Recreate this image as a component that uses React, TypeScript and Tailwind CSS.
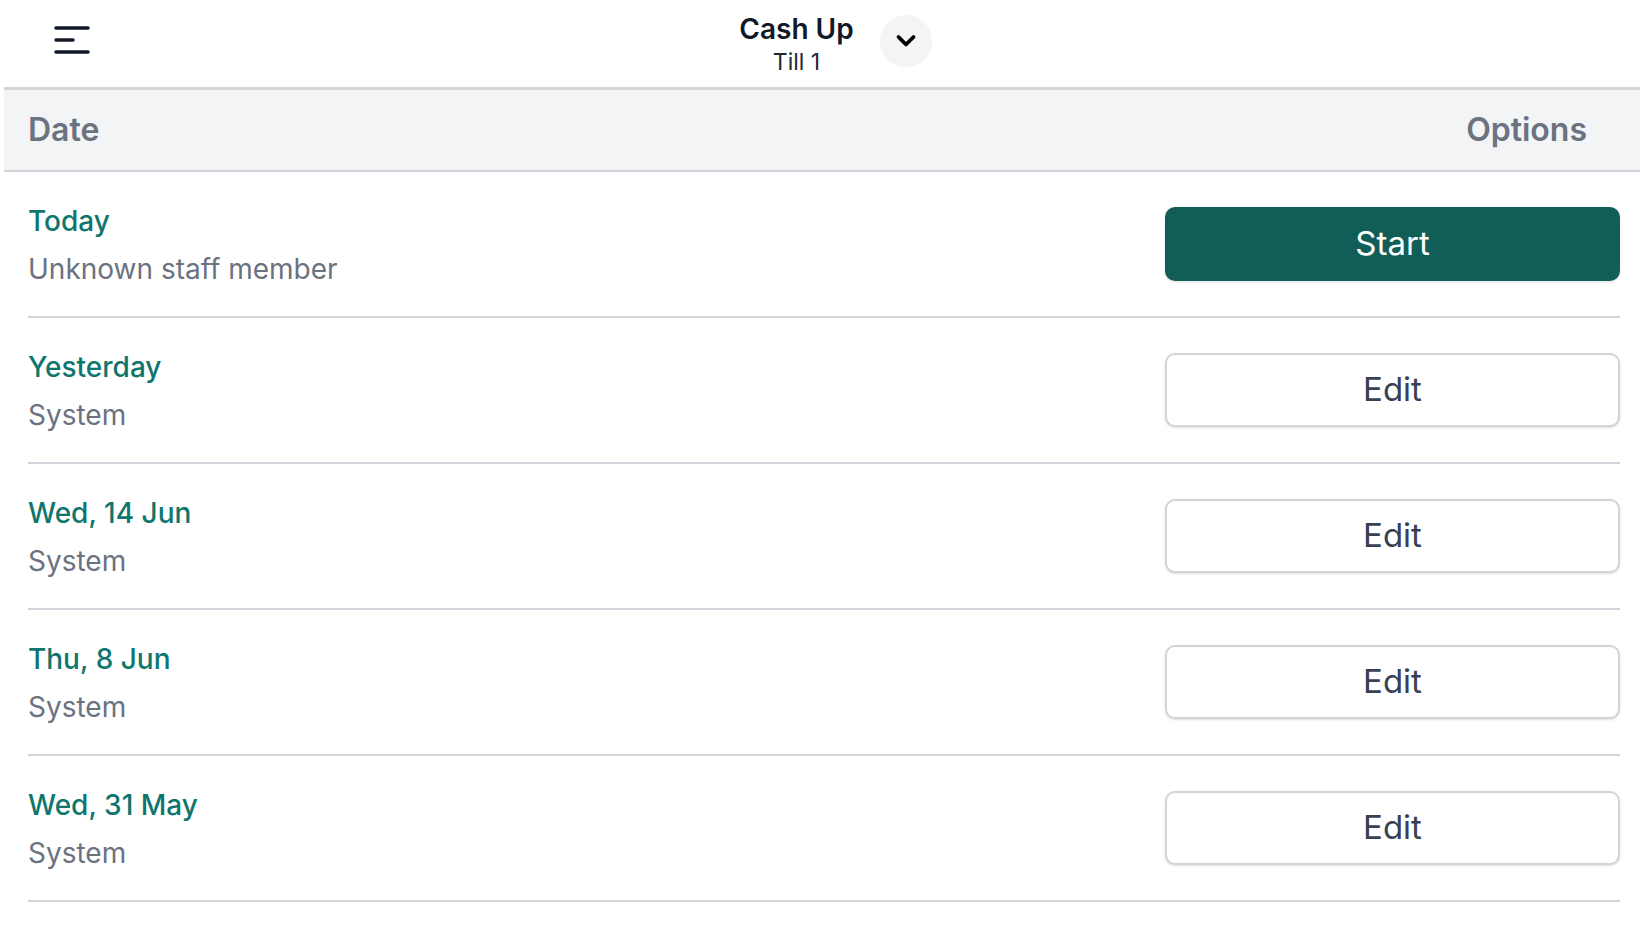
import React from "react";

const rows = [
  { date: "Today", who: "Unknown staff member", action: "Start" },
  { date: "Yesterday", who: "System", action: "Edit" },
  { date: "Wed, 14 Jun", who: "System", action: "Edit" },
  { date: "Thu, 8 Jun", who: "System", action: "Edit" },
  { date: "Wed, 31 May", who: "System", action: "Edit" },
];

export default function App() {
  return (
    <div
      className="min-h-screen bg-white pl-[4px]"
      style={{ fontFamily: "Inter, 'Noto Sans', sans-serif" }}
    >
      <header className="grid h-[90px] grid-cols-[1fr_auto_1fr] items-center border-b-[3px] border-[#d6d6d6]">
        <div className="pl-[50px] mb-[8px]">
          <svg width="36" height="28" viewBox="0 0 36 28" className="block">
            <g stroke="#111827" strokeWidth="3.4" strokeLinecap="round">
              <line x1="2" y1="2" x2="34" y2="2" />
              <line x1="2" y1="14" x2="19" y2="14" />
              <line x1="2" y1="26" x2="34" y2="26" />
            </g>
          </svg>
        </div>
        <div className="ml-[27px] flex items-center gap-[26px]">
          <div className="mt-[2px] flex flex-col items-center">
            <span className="text-[28px] font-semibold leading-[34px] text-[#111827]">
              Cash Up
            </span>
            <span className="text-[23px] leading-[32px] text-[#1f2937]">Till 1</span>
          </div>
          <button className="mb-[6px] flex h-[52px] w-[52px] items-center justify-center rounded-full bg-[#f3f4f6]">
            <svg width="22" height="14" viewBox="0 0 22 14">
              <path
                d="M3.5 3 L11 10.5 L18.5 3"
                fill="none"
                stroke="#000"
                strokeWidth="3.8"
                strokeLinecap="round"
                strokeLinejoin="round"
              />
            </svg>
          </button>
        </div>
        <div />
      </header>

      <div className="flex h-[82px] items-center justify-between border-b-2 border-[#d1d5db] bg-[#f3f4f6] pl-[24px] pr-[53px]">
        <span className="text-[32px] font-semibold text-[#6b7280]">Date</span>
        <span className="text-[32px] font-semibold text-[#6b7280]">Options</span>
      </div>

      <div className="ml-[24px] mr-[20px]">
        {rows.map((r) => (
          <div
            key={r.date}
            className="flex items-center justify-between border-b-2 border-[#d1d5db] pt-[28px] pb-[26px]"
          >
            <div className="flex flex-col gap-[6px]">
              <span className="text-[28px] font-medium leading-[42px] text-[#0f766e]">
                {r.date}
              </span>
              <span className="text-[28px] leading-[42px] text-[#6b7280]">{r.who}</span>
            </div>
            {r.action === "Start" ? (
              <button className="mb-[2px] flex h-[74px] w-[455px] items-center justify-center rounded-[10px] bg-[#115e59] text-[33px] text-white shadow-sm">
                Start
              </button>
            ) : (
              <button className="mb-[2px] flex h-[74px] w-[455px] items-center justify-center rounded-[10px] border-2 border-[#d1d5db] bg-white text-[33px] text-[#374151] shadow-sm">
                Edit
              </button>
            )}
          </div>
        ))}
      </div>
    </div>
  );
}
